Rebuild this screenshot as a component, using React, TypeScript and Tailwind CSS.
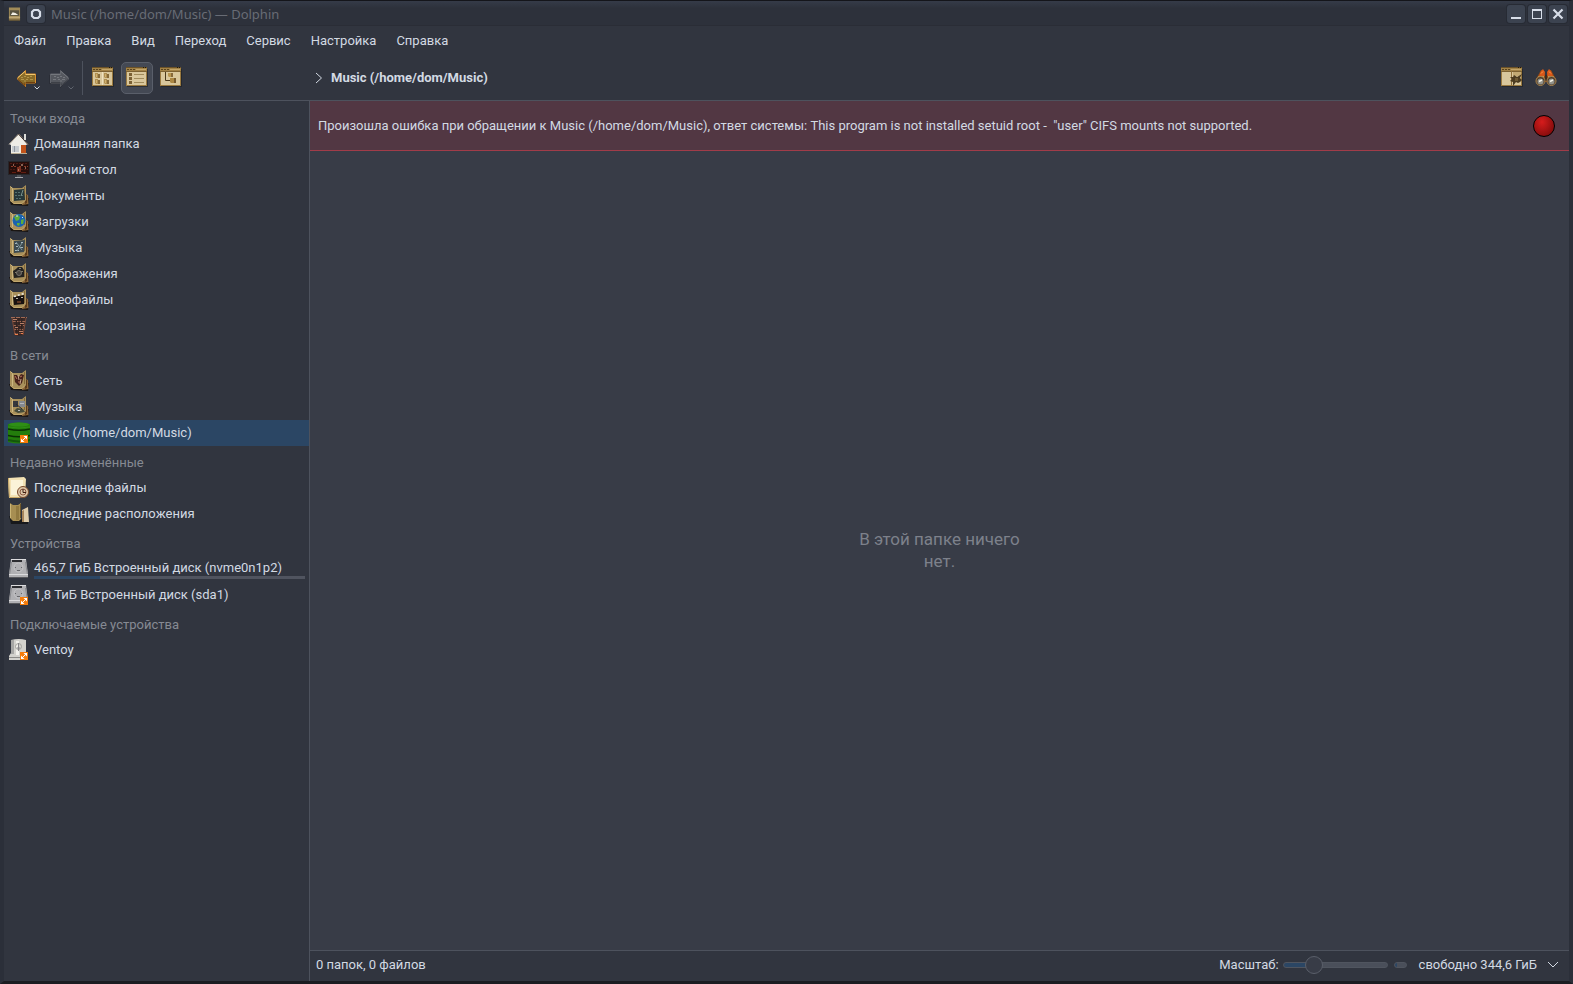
import React, { useState } from 'react';

type PlaceIcon = React.FC;

interface Place {
  id: string;
  label: string;
  icon: PlaceIcon;
  usage?: number;
}

interface PlaceGroup {
  title: string;
  places: Place[];
}

/* ---------- toolbar icons ---------- */

const ArrowIcon: React.FC<{ disabled?: boolean }> = ({ disabled }) => (
  <svg viewBox="0 0 22 22" className={`h-[22px] w-[22px] ${disabled ? '-scale-x-100' : ''}`} aria-hidden="true">
    <path d="M3 13 L11 5 V8 H21.5 V17 H11 V21 Z" fill="#17181c" opacity="0.5" />
    <path
      d="M2 11.5 L10.5 3.5 V7 H20.5 V16 H10.5 V19.5 Z"
      fill={disabled ? '#55585f' : '#8a6c28'}
      stroke={disabled ? '#62656c' : '#d98f30'}
    />
    <path d="M3 10.5 L10 4.5 M10.5 7.5 H20" stroke={disabled ? '#74777d' : '#f3c86c'} fill="none" />
    <path d="M3 12.5 L10 18.5 V15.5 M11 15.5 H20" stroke={disabled ? '#3d4047' : '#6e3d0c'} fill="none" />
    <path
      d="M6 10.5 H8 M9 9.5 H11 M12 10.5 H14 M15 9.5 H17 M6 12.5 H9 M11 12.5 H13 M15 12.5 H18 M9 14 H11"
      stroke={disabled ? '#74777d' : '#b3954a'}
    />
  </svg>
);

const WindowFrame: React.FC<{ children?: React.ReactNode }> = ({ children }) => (
  <svg viewBox="0 1 22 22" className="h-[22px] w-[22px]" aria-hidden="true">
    <rect x="1" y="3" width="21" height="18" fill="#1d1e22" opacity="0.6" />
    <rect x="0.5" y="1.5" width="20" height="18" fill="#d9c79c" stroke="#9a7a40" />
    <rect x="0" y="1" width="21" height="5" fill="#a28246" />
    <path d="M0 1.5 H21" stroke="#6b5228" />
    <path d="M1 3.5 H9" stroke="#5a441f" strokeDasharray="2 1" />
    <path d="M10 3.5 H20" stroke="#c3a568" />
    <path d="M0 5.5 H21" stroke="#7d6232" />
    <path d="M17 1.5 H18 M19 1.5 H20" stroke="#221a0d" />
    {children}
  </svg>
);

const IconsViewIcon: React.FC = () => (
  <WindowFrame>
    {[3, 12].map((x) =>
      [7, 13].map((y) => (
        <g key={`${x}-${y}`}>
          <path d={`M${x} ${y} H${x + 3} V${y + 5} H${x + 1} L${x} ${y + 4} Z`} fill="#b08f50" />
          <path d={`M${x + 3} ${y + 1} H${x + 5} V${y + 5} H${x + 3} Z`} fill="#866a38" />
          <rect x={x + 1} y={y + 1} width="1" height="3" fill="#cdb071" />
        </g>
      ))
    )}
    <path d="M10.5 6 V19" stroke="#efe2bf" />
  </WindowFrame>
);

const DetailsViewIcon: React.FC = () => (
  <WindowFrame>
    {[7, 11, 15].map((y) => (
      <g key={y}>
        <rect x="3" y={y} width="3" height="3" fill="#7a6034" />
        <path d={`M8 ${y + 1.5} H18`} stroke="#a08b5c" />
      </g>
    ))}
  </WindowFrame>
);

const TreeViewIcon: React.FC = () => (
  <WindowFrame>
    <path d="M5.5 6 V14.5 H10" stroke="#4c3a1b" fill="none" />
    <path d="M8 7 H11 V11 H9 L8 10 Z" fill="#b8964f" />
    <path d="M11 7 H13 V11 H11 Z" fill="#86693a" />
    <path d="M10 12 H14 V17 H11 L10 16 Z" fill="#ab8743" />
    <path d="M14 12 H16 V17 H14 Z" fill="#765a2e" />
  </WindowFrame>
);

const SplitViewIcon: React.FC = () => (
  <WindowFrame>
    <path d="M10.5 5 V19" stroke="#8f713a" />
    <rect x="12" y="6" width="8" height="4" fill="#c3aa73" />
    <path
      d="M9 11 L12 11 L13 9 L16 11 L21 8 L19 12 L21 14 L19 16 L17 17 L15 16 L12 20 L12 16 L9 15 L11 13 Z"
      fill="#4c3c20"
    />
    <rect x="14" y="12" width="3" height="3" fill="#6d5932" />
  </WindowFrame>
);

const BinocularsIcon: React.FC = () => (
  <svg viewBox="0 0 22 22" className="h-[22px] w-[22px]" aria-hidden="true">
    <path d="M6 3 L9 4 L10 8 H12 L13 4 L16 3 L21 12 V15 H1 V12 Z" fill="#8a4818" />
    <path d="M6 4 L8 2 L10 5 L9.5 9 L4 9 Z M16 4 L14 2 L12 5 L12.5 9 L18 9 Z" fill="#d9581a" />
    <path d="M6 6.5 L8 4.5 M14 4.5 L16 6.5" stroke="#ff9d4a" />
    <path d="M3 10 H9 M13 10 H19" stroke="#dcae68" strokeWidth="1.5" />
    <rect x="10" y="8" width="2" height="6" fill="#3e2b1d" />
    <circle cx="5.5" cy="14" r="4.5" fill="#4c3b2a" stroke="#a98650" />
    <circle cx="16.5" cy="14" r="4.5" fill="#4c3b2a" stroke="#a98650" />
    <circle cx="5.5" cy="14.5" r="3" fill="#92928a" />
    <circle cx="16.5" cy="14.5" r="3" fill="#92928a" />
    <path d="M4 14.5 L7 13 M15 14.5 L18 13" stroke="#f2f1e6" strokeWidth="1.5" />
  </svg>
);

const SmallCaret: React.FC<{ className: string }> = ({ className }) => (
  <svg viewBox="0 0 6 4" className={`absolute right-0 bottom-1 h-1 w-1.5 ${className}`} aria-hidden="true">
    <path d="M0.5 0.5 L3 3 L5.5 0.5" fill="none" stroke="currentColor" />
  </svg>
);

/* ---------- places icons ---------- */

const PlaceSvg: React.FC<{ children: React.ReactNode }> = ({ children }) => (
  <svg viewBox="0 0 22 22" className="h-[22px] w-[22px] shrink-0" aria-hidden="true">
    {children}
  </svg>
);

const UnmountedBadge: React.FC = () => (
  <g>
    <rect x="12" y="13" width="8" height="8" fill="#f57c0a" />
    <path d="M15.5 14 H19 V17.5 Z M13 16.5 V20 H16.5 Z" fill="#fff" />
    <path d="M14 19 L18 15" stroke="#fff" />
  </g>
);

const FolderBase: React.FC<{ children?: React.ReactNode }> = ({ children }) => (
  <PlaceSvg>
    <path d="M1 14 L3 20 L20 21 L21 13 Z" fill="#1a1512" />
    <path d="M15 8 L20 10 L20.5 19 L14 20 Z" fill="#8d683a" />
    <path d="M17 9 L19 10 V18 L17 19 Z" fill="#5b3b1c" />
    <path d="M2 1 L5 3 H14 L18 0 L18 15 L14 19 H6 L2 16 Z" fill="#a8905b" />
    <path d="M2.5 1.5 L4.5 3.5 V16" stroke="#cdb780" fill="none" />
    <path d="M2.5 15.5 L6 18.5 H14 L17 15.5" stroke="#c2a76c" fill="none" />
    <path d="M16.5 2 V14" stroke="#84693a" />
    {children}
  </PlaceSvg>
);

const HomeIcon: PlaceIcon = () => (
  <PlaceSvg>
    <rect x="16" y="1" width="2" height="6" fill="#dededa" />
    <path d="M11 1 L20 11 L18 12 V20 H3 V12 L1 11 Z" fill="#efede6" />
    <path d="M1 11.5 L10.5 1 L20 11.5" stroke="#a99d8d" fill="none" />
    <path d="M10.5 1 L20 11.5" stroke="#3f302a" />
    <rect x="4" y="13" width="7" height="6" fill="#9098a0" />
    <path d="M5 13 V19 M8 13 V19 M10 13 V19" stroke="#fff" />
    <rect x="13" y="12" width="5" height="8" fill="#c2541b" />
    <path d="M3 20.5 H19" stroke="#b9ad94" />
  </PlaceSvg>
);

const DesktopIcon: PlaceIcon = () => (
  <PlaceSvg>
    <rect x="0.5" y="2.5" width="21" height="13" fill="#260e0b" stroke="#26262a" />
    <path d="M2 4.5 H20 M2 10.5 H8 M13 10.5 H20" stroke="#4d1a12" strokeDasharray="2 1" />
    <path d="M3 7.5 H9 M11 7.5 H14 M16 7.5 H20" stroke="#8d3a26" strokeDasharray="2 1" />
    <path d="M9 8 H13 V13 H9 Z" fill="#7b3020" />
    <path d="M5 6 H6 M13 6 H15 M10 11 H11 M17 9 H18" stroke="#eab79d" />
    <path d="M4 13.5 H8 M13 13.5 H18" stroke="#611d12" />
    <rect x="9" y="16" width="4" height="2" fill="#4e5157" />
    <rect x="7" y="18" width="8" height="1" fill="#a5a7ac" />
  </PlaceSvg>
);

const DocumentsIcon: PlaceIcon = () => (
  <FolderBase>
    <path d="M6 5 L16 4 L17 15 L6 16 Z" fill="#26373a" />
    <path d="M7 7.5 H13 M7 10.5 H15 M8 13.5 H14" stroke="#54706f" strokeDasharray="2 1" />
    <path d="M15 5 L13 11" stroke="#7b918c" />
  </FolderBase>
);

const DownloadsIcon: PlaceIcon = () => (
  <FolderBase>
    <circle cx="11" cy="9.5" r="6.5" fill="#1a62b0" />
    <path d="M6 6 L10 4 L12 6 L11 9 L8 10 Z M13 9 L16 8 L15 13 L13 13 Z M9 12 L12 12 L11 15 L9 14 Z" fill="#5dad3c" />
    <path d="M8 5 L10 5 M14 6 L15 7" stroke="#cfe8f5" />
  </FolderBase>
);

const MusicIcon: PlaceIcon = () => (
  <FolderBase>
    <path d="M6 4 L17 3 L16 15 L6 16 Z" fill="#3c4a4f" />
    <path d="M7 6.5 H9 M13 5.5 H15 M8 9.5 H10 M12 10.5 H15 M7 13.5 H11" stroke="#a9bac0" strokeWidth="1.2" />
    <path d="M8 5 L14 13 M14 6 L9 14" stroke="#7a9197" />
  </FolderBase>
);

const PicturesIcon: PlaceIcon = () => (
  <FolderBase>
    <path d="M5 8 L8 6 L10 4 L14 4 L16 7 L16 14 L6 15 Z" fill="#242321" />
    <path d="M7 9.5 H9 M13 8.5 H15 M11 5.5 H13" stroke="#86806f" />
    <circle cx="11" cy="10" r="2.5" fill="#45423e" stroke="#74706a" />
  </FolderBase>
);

const VideosIcon: PlaceIcon = () => (
  <FolderBase>
    <path d="M5 8 L16 6 L16 15 L6 16 Z" fill="#171210" />
    <path d="M6 7.5 L16 4.5" stroke="#ebe9e2" strokeWidth="1.6" strokeDasharray="2 2" />
    <path d="M8 9.5 H10 M13 8.5 H15" stroke="#bcb6a8" />
    <path d="M9 12 H13 V14 H9 Z" fill="#5b3522" />
  </FolderBase>
);

const TrashIcon: PlaceIcon = () => (
  <PlaceSvg>
    <path d="M4 2 H18 L16 20 L11 21 L6 20 Z" fill="#3d2a26" />
    <path d="M3 2.5 H19 M4 6.5 H18 M5 10.5 H17 M6 14.5 H16 M6 18.5 H16" stroke="#a06a54" strokeDasharray="4 1" />
    <path d="M4 3 L7 20 M18 3 L15 20" stroke="#7b4a3a" />
    <path d="M8 3 L9 20 M11 3 V20 M14 3 L13 20" stroke="#2c2020" />
    <path d="M5 4.5 H9 M12 8.5 H16 M7 12.5 H10 M11 16.5 H15" stroke="#b98068" />
    <path d="M7 19.5 H10 M13 18.5 H15" stroke="#ee7f4c" />
  </PlaceSvg>
);

const NetworkIcon: PlaceIcon = () => (
  <FolderBase>
    <path d="M6 5 L9 5 L11 7 L13 4 L16 5 L14 13 L11 16 L7 12 Z" fill="#46211a" />
    <path d="M7 6 L9 9 M12 7 L14 6 M10 12 H12" stroke="#b5715a" />
    <path d="M10 5 L11 10 M13 9 L12 14" stroke="#c4a48c" />
  </FolderBase>
);

const RemoteMusicIcon: PlaceIcon = () => (
  <FolderBase>
    <rect x="5" y="5" width="5" height="6" fill="#35383d" />
    <rect x="11" y="5" width="6" height="6" fill="#84888f" />
    <path d="M6 15 L9 12 L15 13 L17 16 L10 17 Z" fill="#454b3a" />
    <path d="M8 8 L14 13" stroke="#292a2e" />
    <path d="M12 7.5 H16 M10 14.5 H12" stroke="#b5b8bd" />
  </FolderBase>
);

const ShareIcon: PlaceIcon = () => (
  <PlaceSvg>
    <path d="M0 2 Q11 -1 22 2 V20 Q11 23 0 20 Z" fill="#237d0c" />
    <ellipse cx="11" cy="2.5" rx="10" ry="2" fill="#2f8f16" />
    <path d="M0 7 Q11 9.5 22 7 M0 13.5 Q11 16 22 13.5" stroke="#0a3104" strokeWidth="1.5" fill="none" />
    <path d="M0 5 Q11 7 22 5" stroke="#2f8f16" fill="none" />
    <path d="M0 18 Q11 21 22 18" stroke="#14560a" strokeWidth="2" fill="none" />
    <UnmountedBadge />
  </PlaceSvg>
);

const RecentFilesIcon: PlaceIcon = () => (
  <PlaceSvg>
    <path d="M0 1 L16 0 L18 2 L17 20 L1 21 Z" fill="#f3e2b4" />
    <path d="M3 3 H15 V18 H3 Z" fill="#fbf3d8" />
    <path d="M0.5 1 L1.5 20.5 H12" stroke="#c9a765" fill="none" />
    <circle cx="15" cy="15" r="5.5" fill="#dcc6a8" stroke="#7b4a2a" />
    <circle cx="15" cy="15" r="3" fill="none" stroke="#8d5a42" />
    <path d="M15 12 V15.5 H18" stroke="#3f1d12" fill="none" />
  </PlaceSvg>
);

const RecentPlacesIcon: PlaceIcon = () => (
  <PlaceSvg>
    <path d="M1 13 L3 21 L20 21 V18 Z" fill="#17181b" />
    <path d="M14 7 L20 4 L21 19 L14 19 Z" fill="#e0cdab" />
    <path d="M14 8 L16 7 V19 H14 Z" fill="#a8855a" />
    <path d="M2 0 L5 2 H10 L13 0 V16 L11 18 H5 L2 15 Z" fill="#a78e52" />
    <path d="M2.5 1 V15" stroke="#cbb475" />
    <path d="M8 3 H11 V17 H8 Z" fill="#917940" />
    <path d="M12.5 1 V15" stroke="#6e5527" />
  </PlaceSvg>
);

const DriveBody: React.FC = () => (
  <>
    <path d="M3 1 H18 L20 16 V20 H1 V16 Z" fill="#b0b0b3" />
    <path d="M3 1.5 H18" stroke="#dcdcde" />
    <rect x="4" y="2" width="10" height="2" fill="#2c2d31" />
    <path d="M1.5 17 L3.5 4 M19.5 17 L17.5 4" stroke="#8b8c90" />
    <path d="M7 9.5 H8 M13 9.5 H14 M9 12.5 H12" stroke="#66676b" />
    <circle cx="10.5" cy="9.5" r="4.5" fill="none" stroke="#c3c3c6" />
    <path d="M1 16.5 H20" stroke="#dadadc" />
    <path d="M1 19.5 H20" stroke="#57585c" />
  </>
);

const DriveIcon: PlaceIcon = () => (
  <PlaceSvg>
    <DriveBody />
  </PlaceSvg>
);

const UnmountedDriveIcon: PlaceIcon = () => (
  <PlaceSvg>
    <DriveBody />
    <UnmountedBadge />
  </PlaceSvg>
);

const UsbDriveIcon: PlaceIcon = () => (
  <PlaceSvg>
    <path d="M3 1 Q11 -1 18 1 L18 14 L20 17 V21 H1 V17 L3 14 Z" fill="#d3d2cd" />
    <path d="M3 1 H6 V15 H3 Z" fill="#a7a7a5" />
    <path d="M8 2 H11 V16 H8 Z" fill="#f2f1ec" />
    <circle cx="10.5" cy="7.5" r="3" fill="none" stroke="#a3a29d" />
    <path d="M10.5 4 V12 M9 9 H12" stroke="#88878a" />
    <path d="M1 18.5 H20" stroke="#8a8986" />
    <UnmountedBadge />
  </PlaceSvg>
);

/* ---------- data ---------- */

const menus = ['Файл', 'Правка', 'Вид', 'Переход', 'Сервис', 'Настройка', 'Справка'];

const groups: PlaceGroup[] = [
  {
    title: 'Точки входа',
    places: [
      { id: 'home', label: 'Домашняя папка', icon: HomeIcon },
      { id: 'desktop', label: 'Рабочий стол', icon: DesktopIcon },
      { id: 'documents', label: 'Документы', icon: DocumentsIcon },
      { id: 'downloads', label: 'Загрузки', icon: DownloadsIcon },
      { id: 'music', label: 'Музыка', icon: MusicIcon },
      { id: 'pictures', label: 'Изображения', icon: PicturesIcon },
      { id: 'videos', label: 'Видеофайлы', icon: VideosIcon },
      { id: 'trash', label: 'Корзина', icon: TrashIcon }
    ]
  },
  {
    title: 'В сети',
    places: [
      { id: 'network', label: 'Сеть', icon: NetworkIcon },
      { id: 'remote-music', label: 'Музыка', icon: RemoteMusicIcon },
      { id: 'share', label: 'Music (/home/dom/Music)', icon: ShareIcon }
    ]
  },
  {
    title: 'Недавно изменённые',
    places: [
      { id: 'recent-files', label: 'Последние файлы', icon: RecentFilesIcon },
      { id: 'recent-places', label: 'Последние расположения', icon: RecentPlacesIcon }
    ]
  },
  {
    title: 'Устройства',
    places: [
      { id: 'nvme', label: '465,7 ГиБ Встроенный диск (nvme0n1p2)', icon: DriveIcon, usage: 24.5 },
      { id: 'sda', label: '1,8 ТиБ Встроенный диск (sda1)', icon: UnmountedDriveIcon }
    ]
  },
  {
    title: 'Подключаемые устройства',
    places: [{ id: 'ventoy', label: 'Ventoy', icon: UsbDriveIcon }]
  }
];

const views = [
  { id: 'icons', label: 'Значки', icon: IconsViewIcon },
  { id: 'details', label: 'Таблица', icon: DetailsViewIcon },
  { id: 'tree', label: 'Столбцы', icon: TreeViewIcon }
];

/* ---------- window parts ---------- */

const titleButton =
  'flex h-[18px] w-[18px] items-center justify-center rounded-[3px] bg-[#3c4350] text-[#d8dee9] shadow-[0_0_0_1px_#272b34]';

const TitleBar: React.FC = () => (
  <header className="flex h-[25px] items-center gap-1.5 border-b border-[#2a2d36] bg-linear-to-b from-[#353b48] from-0% to-[#2d313b] to-30% pt-0.5 pr-0.5 pl-1">
    <svg viewBox="0 0 14 14" className="h-3.5 w-[13px]" aria-hidden="true">
      <rect x="1" y="0" width="12" height="14" fill="#a18b58" />
      <rect x="2" y="3" width="10" height="6" fill="#57523f" />
      <path d="M3 8 L5 5 L8 6 L11 8 Z" fill="#f1efe4" />
      <path d="M1 10.5 H13" stroke="#cbb684" />
      <path d="M1 13.5 H13" stroke="#5b4a28" />
    </svg>
    <button className={titleButton} aria-label="На всех рабочих столах">
      <svg viewBox="0 0 12 12" className="h-3 w-3" aria-hidden="true">
        <path d="M4 2 H8 L10 4 V8 L8 10 H4 L2 8 V4 Z" fill="none" stroke="currentColor" strokeWidth="2.2" />
      </svg>
    </button>
    <h1 className="flex-1 truncate font-['Noto_Sans',sans-serif] text-[13px] text-[#686c75]">
      Music (/home/dom/Music) — Dolphin
    </h1>
    <div className="flex gap-[3px]">
      <button className={titleButton} aria-label="Свернуть">
        <svg viewBox="0 0 12 12" className="h-3 w-3" aria-hidden="true">
          <path d="M1 10 H11" stroke="currentColor" strokeWidth="2" />
        </svg>
      </button>
      <button className={titleButton} aria-label="Распахнуть">
        <svg viewBox="0 0 12 12" className="h-3 w-3" aria-hidden="true">
          <path d="M1 10.5 H11 M1.5 1 V11 M10.5 1 V11" stroke="currentColor" />
          <path d="M1 2 H11" stroke="currentColor" strokeWidth="2" />
        </svg>
      </button>
      <button className={titleButton} aria-label="Закрыть">
        <svg viewBox="0 0 12 12" className="h-3 w-3" aria-hidden="true">
          <path d="M1.5 1.5 L10.5 10.5 M10.5 1.5 L1.5 10.5" stroke="currentColor" strokeWidth="2.2" />
        </svg>
      </button>
    </div>
  </header>
);

const App: React.FC = () => {
  const [activePlace, setActivePlace] = useState('share');
  const [activeView, setActiveView] = useState('details');
  const [zoom, setZoom] = useState(25);

  return (
    <div className="flex h-screen flex-col border-x-4 border-t border-b-[3px] border-x-[#2b2f39] border-t-[#14151a] border-b-[#1b1c21] bg-[#31353f] font-[Roboto,sans-serif] text-[13px] leading-5 text-[#d3dae3]">
      <TitleBar />

      <nav className="flex h-[30px] items-center gap-5 px-2.5">
        {menus.map((menu) => (
          <button key={menu}>{menu}</button>
        ))}
      </nav>

      <div className="flex h-[45px] items-center border-b border-[#4d525d] pr-3 pl-2">
        <div className="flex w-[303px] shrink-0 items-center">
          <button className="relative flex h-8 w-7 items-center justify-center" aria-label="Назад">
            <ArrowIcon />
            <SmallCaret className="text-[#d3dae3]" />
          </button>
          <button className="relative ml-1.5 flex h-8 w-7 items-center justify-center" disabled aria-label="Вперёд">
            <ArrowIcon disabled />
            <SmallCaret className="text-[#5f646e]" />
          </button>
          <div className="ml-2 h-[34px] w-px bg-[#4d525d]" />
          <div className="ml-1 flex gap-0.5">
            {views.map((view) => (
              <button
                key={view.id}
                aria-label={view.label}
                aria-pressed={activeView === view.id}
                onClick={() => setActiveView(view.id)}
                className={`flex h-8 w-8 items-center justify-center rounded-[5px] border ${
                  activeView === view.id ? 'border-[#5a5f6a] bg-[#444954]' : 'border-transparent'
                }`}
              >
                <view.icon />
              </button>
            ))}
          </div>
        </div>
        <div className="flex flex-1 items-center gap-2">
          <svg viewBox="0 0 8 12" className="h-3 w-2" aria-hidden="true">
            <path d="M1 1 L6.5 6 L1 11" fill="none" stroke="#d3dae3" />
          </svg>
          <button className="font-bold">Music (/home/dom/Music)</button>
        </div>
        <div className="flex gap-3">
          <button aria-label="Разделить">
            <SplitViewIcon />
          </button>
          <button aria-label="Поиск">
            <BinocularsIcon />
          </button>
        </div>
      </div>

      <div className="flex min-h-0 flex-1">
        <aside className="w-[306px] shrink-0 border-r border-[#4d525d] pt-px">
          {groups.map((group) => (
            <section key={group.title}>
              <h2 className="flex h-[29px] items-center px-1.5 pt-1 text-[#868a93]">{group.title}</h2>
              <ul>
                {group.places.map((place) => (
                  <li key={place.id}>
                    <button
                      onClick={() => setActivePlace(place.id)}
                      className={`flex h-[26px] w-full items-center gap-1 px-1 text-left ${
                        activePlace === place.id ? 'bg-[#2b4664]' : ''
                      }`}
                    >
                      <place.icon />
                      {place.usage === undefined ? (
                        <span className="truncate">{place.label}</span>
                      ) : (
                        <span className="flex min-w-0 flex-1 flex-col">
                          <span className="truncate leading-4">{place.label}</span>
                          <span className="h-[3px] bg-[#50545f]">
                            <span className="block h-full bg-[#2b4664]" style={{ width: `${place.usage}%` }} />
                          </span>
                        </span>
                      )}
                    </button>
                  </li>
                ))}
              </ul>
            </section>
          ))}
        </aside>

        <main className="flex min-w-0 flex-1 flex-col">
          <div
            role="alert"
            className="flex h-[50px] items-center justify-between border-b border-[#a13c49] bg-[#523743] pr-3.5 pl-2"
          >
            <p className="whitespace-pre">
              {'Произошла ошибка при обращении к Music (/home/dom/Music), ответ системы: This program is not installed setuid root -  "user" CIFS mounts not supported.'}
            </p>
            <button
              aria-label="Закрыть сообщение"
              className="h-[22px] w-[22px] rounded-full border border-black bg-radial-[at_40%_30%] from-[#d61c1c] to-[#6d0808]"
            />
          </div>

          <div className="flex flex-1 items-center justify-center bg-[#383c47] pb-0.5">
            <p className="w-[180px] text-center text-[17px] leading-[22px] text-[#7d818b]">В этой папке ничего нет.</p>
          </div>

          <footer className="flex h-[31px] items-center border-t border-[#4d525d] px-1.5 pb-0.5">
            <span className="flex-1">0 папок, 0 файлов</span>
            <label htmlFor="zoom">Масштаб:</label>
            <input
              id="zoom"
              type="range"
              min="0"
              max="100"
              value={zoom}
              onChange={(e) => setZoom(Number(e.target.value))}
              style={{ backgroundImage: `linear-gradient(to right, #2b4664 ${zoom}%, #4a4f5a ${zoom}%)` }}
              className="ml-1 h-1.5 w-[105px] appearance-none rounded-full border border-[#50555f] [&::-webkit-slider-thumb]:h-[18px] [&::-webkit-slider-thumb]:w-[18px] [&::-webkit-slider-thumb]:appearance-none [&::-webkit-slider-thumb]:rounded-full [&::-webkit-slider-thumb]:border [&::-webkit-slider-thumb]:border-[#5a5f6a] [&::-webkit-slider-thumb]:bg-[#383c47]"
            />
            <span className="ml-1.5 h-1.5 w-[13px] rounded-full border border-[#50555f] bg-linear-to-r from-[#2b4664] from-20% to-[#4a4f5a] to-20%" />
            <button className="ml-3 flex items-center gap-2.5 pr-1">
              свободно 344,6 ГиБ
              <svg viewBox="0 0 12 8" className="h-2 w-3" aria-hidden="true">
                <path d="M1 1 L6 6 L11 1" fill="none" stroke="currentColor" />
              </svg>
            </button>
          </footer>
        </main>
      </div>
    </div>
  );
};

export default App;
